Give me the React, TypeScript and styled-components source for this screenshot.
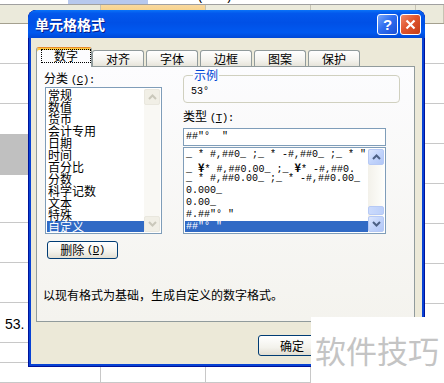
import React from "react";
import styled, { createGlobalStyle, css } from "styled-components";

const CJK = `"Noto Sans CJK SC", "Noto Sans CJK JP", sans-serif`;
const MONO = `"Liberation Mono", "Noto Sans CJK SC", monospace`;

const GlobalStyle = createGlobalStyle`
  html, body {
    margin: 0;
    padding: 0;
    background: #fff;
  }
  body {
    font-family: ${CJK};
  }
`;

const Page = styled.div`
  position: relative;
  width: 444px;
  height: 383px;
  overflow: hidden;
  background: #fff;
`;

/* ---------- spreadsheet behind the dialog ---------- */

const Sheet = styled.div`
  display: flex;
  flex-direction: column;
  width: 444px;
  height: 383px;
`;

const TopStrip = styled.div`
  display: grid;
  grid-template-columns: 68px 80px 1fr;
  height: 5px;
  box-sizing: border-box;
  border-bottom: 1px solid #a0a0a0;
  overflow: hidden;
`;

const SelCell = styled.div`
  background: #b6c8ee;
`;

const CutText = styled.div`
  font: 12px/12px ${MONO};
  margin: -9px 0 0 20px;
  color: #000;
  white-space: nowrap;
`;

const HeaderRow = styled.div`
  display: grid;
  grid-template-columns: 101px 105px 105px 105px 1fr;
  height: 20px;
  box-sizing: border-box;
  background: #ebeadb;
  border-bottom: 1px solid #a4a08f;
`;

const HeadCell = styled.div<{ $active?: boolean }>`
  border-right: 1px solid #c6c3b3;
  background: ${(p) => (p.$active ? "linear-gradient(#f9d99f, #f1c15f)" : "transparent")};
`;

const Body = styled.div`
  display: flex;
  flex: 1;
`;

const ColA = styled.div`
  display: flex;
  flex-direction: column;
  width: 101px;
  border-right: 1px solid #c8c8c8;
  box-sizing: border-box;
`;

const CellA = styled.div<{ $h: number; $gray?: boolean; $line?: boolean }>`
  height: ${(p) => p.$h}px;
  flex: none;
  box-sizing: border-box;
  background: ${(p) => (p.$gray ? "#c0c0c0" : "#fff")};
  border-bottom: ${(p) => (p.$line ? "1px solid #c8c8c8" : "none")};
  font: 14px/20px "Liberation Sans", sans-serif;
  color: #000;
  padding: 11px 0 0 5px;
`;

const Rest = styled.div`
  display: flex;
  flex-direction: column;
  flex: 1;
`;

const Row = styled.div<{ $h: number }>`
  display: grid;
  grid-template-columns: 105px 105px 105px 1fr;
  height: ${(p) => p.$h}px;
  flex: none;
  box-sizing: border-box;
  border-bottom: 1px solid #c8c8c8;
`;

const Cell = styled.div`
  border-right: 1px solid #c8c8c8;
`;

/* ---------- dialog window ---------- */

const Dialog = styled.div`
  position: absolute;
  left: 28px;
  top: 10px;
  width: 397px;
  height: 357px;
  display: flex;
  flex-direction: column;
  border-radius: 8px 8px 0 0;
  background: #0842d4;
  box-shadow: inset 0 0 0 1px #00139a;
  overflow: hidden;
`;

const TitleBar = styled.div`
  height: 28px;
  flex: none;
  display: flex;
  align-items: center;
  padding: 0 4px 0 7px;
  background: linear-gradient(
    #0a74f8 0%,
    #0358ec 12%,
    #0050e6 45%,
    #0059f0 80%,
    #0048d6 100%
  );
  border-radius: 8px 8px 0 0;
`;

const Title = styled.div`
  font: bold 14px/16px ${CJK};
  color: #fff;
  text-shadow: 1px 1px 0 #0a1c88;
`;

const CaptionButtons = styled.div`
  margin-left: auto;
  display: flex;
  gap: 2px;
`;

const CaptionButton = styled.div<{ $close?: boolean }>`
  width: 21px;
  height: 21px;
  box-sizing: border-box;
  border: 1px solid #fff;
  border-radius: 3px;
  display: flex;
  align-items: center;
  justify-content: center;
  color: #fff;
  font: bold 15px/15px "Liberation Sans", sans-serif;
  background: ${(p) =>
    p.$close
      ? "linear-gradient(135deg, #f08a6a, #e0552e 45%, #c43d16)"
      : "linear-gradient(135deg, #7aa8fa, #2f6ef0 45%, #1a4fd6)"};
`;

const Client = styled.div`
  flex: 1;
  margin: 0 3px 3px;
  background: #ece9d8;
  display: flex;
  flex-direction: column;
  padding: 9px 0 0 5px;
`;

const TabStrip = styled.div`
  display: flex;
  align-items: flex-end;
  gap: 2px;
  height: 19px;
  padding-left: 2px;
`;

const Tab = styled.div<{ $active?: boolean }>`
  box-sizing: border-box;
  width: 52px;
  height: 16px;
  border: 1px solid #919b9c;
  border-bottom: none;
  border-radius: 3px 3px 0 0;
  background: linear-gradient(#ffffff, #f4f3ee 60%, #e6e4da);
  font: 12px/15px ${CJK};
  text-align: center;
  color: #000;
  ${(p) =>
    p.$active &&
    css`
      position: relative;
      z-index: 1;
      width: 56px;
      height: 20px;
      margin: 0 -2px -1px;
      border-top: 1px solid #e68b2c;
      box-shadow: inset 0 2px 0 #ffc83c;
      background: #fcfcfe;
      padding: 1px 0 0 4px;
    `}
`;

const FocusLabel = styled.div`
  width: 50px;
  height: 14px;
  box-sizing: border-box;
  border: 1px dotted #000;
  font: 12px/12px ${CJK};
  text-align: center;
`;

const Panel = styled.div`
  width: 379px;
  height: 256px;
  flex: none;
  box-sizing: border-box;
  border: 1px solid #919b9c;
  background: linear-gradient(#fcfcfe, #f4f3ee);
  padding-left: 7px;
`;

const Columns = styled.div`
  display: grid;
  grid-template-columns: 118px 217px;
  column-gap: 21px;
  align-items: start;
`;

const Col = styled.div`
  display: flex;
  flex-direction: column;
  align-items: flex-start;
`;

const Label = styled.div<{ $top: number }>`
  margin-top: ${(p) => p.$top}px;
  font: 12px/13px ${CJK};
  color: #000;
  white-space: nowrap;
`;

const Ascii = styled.span`
  font-family: ${MONO};
  font-size: 11px;
  letter-spacing: -0.6px;
`;

const ListBox = styled.div<{ $w: number; $h: number; $top: number; $left?: number }>`
  width: ${(p) => p.$w}px;
  height: ${(p) => p.$h}px;
  margin-top: ${(p) => p.$top}px;
  margin-left: ${(p) => p.$left ?? 0}px;
  box-sizing: border-box;
  border: 1px solid #7f9db9;
  background: #fff;
  display: flex;
  padding: 1px;
`;

const Items = styled.div`
  flex: 1;
  overflow: hidden;
  display: flex;
  flex-direction: column;
`;

const Item = styled.div<{ $selected?: boolean; $mono?: boolean }>`
  height: 12px;
  flex: none;
  padding-left: 1px;
  white-space: nowrap;
  overflow: hidden;
  font: ${(p) => (p.$mono ? `10px/12px ${MONO}` : `12px/12px ${CJK}`)};
  color: ${(p) => (p.$selected ? "#fff" : "#000")};
  background: ${(p) => (p.$selected ? "#316ac5" : "transparent")};
`;

const Yen = styled.span`
  font-family: ${CJK};
  font-size: 11px;
  line-height: 12px;
  font-weight: bold;
`;

const ScrollBar = styled.div<{ $disabled?: boolean }>`
  width: 16px;
  display: flex;
  flex-direction: column;
  background: ${(p) => (p.$disabled ? "#f9f8f4" : "linear-gradient(90deg, #f3f1ea, #fefefb)")};
`;

const ScrollButton = styled.div<{ $disabled?: boolean }>`
  height: 16px;
  flex: none;
  box-sizing: border-box;
  border-radius: 2px;
  display: flex;
  align-items: center;
  justify-content: center;
  ${(p) =>
    p.$disabled
      ? css`
          border: 1px solid #e9e7de;
          background: #f1efe6;
          color: #cac8bb;
        `
      : css`
          border: 1px solid #b6c9f5;
          background: linear-gradient(135deg, #dde7fe, #c2d4fb 50%, #b2c7f7);
          color: #4d6185;
        `}
`;

const Track = styled.div`
  flex: 1;
  display: flex;
  flex-direction: column;
  justify-content: flex-end;
`;

const Thumb = styled.div`
  height: 9px;
  margin-bottom: 1px;
  box-sizing: border-box;
  border: 1px solid #b6c9f5;
  border-radius: 2px;
  background: linear-gradient(90deg, #cbdafc, #bcd0fa);
`;

const PushButton = styled.div<{ $w: number; $h: number; $top?: number; $left?: number }>`
  width: ${(p) => p.$w}px;
  height: ${(p) => p.$h}px;
  margin-top: ${(p) => p.$top ?? 0}px;
  margin-left: ${(p) => p.$left ?? 0}px;
  box-sizing: border-box;
  border: 1px solid #003c74;
  border-radius: 3px;
  background: linear-gradient(#ffffff, #f3f2ec 60%, #e2ded2);
  display: flex;
  align-items: center;
  justify-content: center;
  font: 12px/12px ${CJK};
  color: #000;
  flex: none;
`;

const GroupBox = styled.fieldset`
  margin: 2px 0 0;
  padding: 0 7px 3px;
  min-width: 0;
  width: 217px;
  box-sizing: border-box;
  border: 1px solid #d0d0bf;
  border-radius: 4px;
`;

const Legend = styled.legend`
  padding: 0 1px;
  margin-left: 2px;
  font: 12px/12px ${CJK};
  color: #0046d5;
`;

const Sample = styled.div`
  margin-top: 4px;
  font: 10px/14px ${MONO};
  color: #000;
`;

const TextBox = styled.div`
  width: 203px;
  height: 18px;
  margin-top: 3px;
  box-sizing: border-box;
  border: 1px solid #7f9db9;
  background: #fff;
  padding: 0 0 0 2px;
  font: 10px/16px ${MONO};
  color: #000;
  white-space: pre;
`;

const Description = styled.div`
  margin: 29px 0 0 -1px;
  font: 12px/13px ${CJK};
  color: #000;
`;

const Footer = styled.div`
  display: flex;
  justify-content: flex-end;
  gap: 6px;
  margin-top: 13px;
  padding-right: 22px;
`;

const Watermark = styled.div`
  position: absolute;
  right: 0;
  bottom: 0;
  width: 133px;
  height: 66px;
  background: #fff;
  display: flex;
  align-items: center;
  padding-left: 4px;
  box-sizing: border-box;
  font: 31px/34px ${CJK};
  color: #c4c4c4;
  white-space: nowrap;
`;

const Arrow = ({ up }: { up?: boolean }) => (
  <svg width="9" height="6" viewBox="0 0 9 6">
    <polyline
      points={up ? "1,5 4.5,1.5 8,5" : "1,1 4.5,4.5 8,1"}
      fill="none"
      stroke="currentColor"
      strokeWidth="2"
    />
  </svg>
);

const CloseGlyph = () => (
  <svg width="11" height="11" viewBox="0 0 11 11">
    <path d="M1.5 1.5 L9.5 9.5 M9.5 1.5 L1.5 9.5" stroke="#fff" strokeWidth="2.2" />
  </svg>
);

const categories = [
  "常规",
  "数值",
  "货币",
  "会计专用",
  "日期",
  "时间",
  "百分比",
  "分数",
  "科学记数",
  "文本",
  "特殊",
  "自定义",
];

const formats: React.ReactNode[] = [
  '_ * #,##0_ ;_ * -#,##0_ ;_ * "',
  <>
    _ <Yen>¥</Yen>* #,##0.00_ ;_ <Yen>¥</Yen>* -#,##0.
  </>,
  "_ * #,##0.00_ ;_ * -#,##0.00_",
  "0.000_",
  "0.00_",
  '#.##"°  "',
  '##"°  "',
];

const tabs = ["数字", "对齐", "字体", "边框", "图案", "保护"];

const colARows: { h: number; gray?: boolean; line?: boolean; text?: string }[] = [
  { h: 40, line: true },
  { h: 40, line: true },
  { h: 30 },
  { h: 41, gray: true },
  { h: 48, line: true },
  { h: 40, line: true },
  { h: 40, line: true },
  { h: 40, line: true, text: "53." },
  { h: 20, line: true },
  { h: 20, line: true },
];

const restRows = [40, 40, 40, 40, 40, 40, 40, 40, 20, 19];

export default function App() {
  return (
    <Page>
      <GlobalStyle />
      <Sheet>
        <TopStrip>
          <div />
          <SelCell />
          <CutText>20% (53°)</CutText>
        </TopStrip>
        <HeaderRow>
          <HeadCell />
          <HeadCell $active />
          <HeadCell />
          <HeadCell />
          <HeadCell />
        </HeaderRow>
        <Body>
          <ColA>
            {colARows.map((r, i) => (
              <CellA key={i} $h={r.h} $gray={r.gray} $line={r.line}>
                {r.text}
              </CellA>
            ))}
          </ColA>
          <Rest>
            {restRows.map((h, i) => (
              <Row key={i} $h={h}>
                <Cell />
                <Cell />
                <Cell />
                <div />
              </Row>
            ))}
          </Rest>
        </Body>
      </Sheet>

      <Dialog>
        <TitleBar>
          <Title>单元格格式</Title>
          <CaptionButtons>
            <CaptionButton>?</CaptionButton>
            <CaptionButton $close>
              <CloseGlyph />
            </CaptionButton>
          </CaptionButtons>
        </TitleBar>
        <Client>
          <TabStrip>
            {tabs.map((t, i) =>
              i === 0 ? (
                <Tab key={t} $active>
                  <FocusLabel>{t}</FocusLabel>
                </Tab>
              ) : (
                <Tab key={t}>{t}</Tab>
              )
            )}
          </TabStrip>
          <Panel>
            <Columns>
              <Col>
                <Label $top={4}>
                  分类 <Ascii>(<u>C</u>):</Ascii>
                </Label>
                <ListBox $w={117} $h={147} $top={0} $left={1}>
                  <Items>
                    {categories.map((c) => (
                      <Item key={c} $selected={c === "自定义"}>
                        {c}
                      </Item>
                    ))}
                  </Items>
                  <ScrollBar $disabled>
                    <ScrollButton $disabled>
                      <Arrow up />
                    </ScrollButton>
                    <Track />
                    <ScrollButton $disabled>
                      <Arrow />
                    </ScrollButton>
                  </ScrollBar>
                </ListBox>
                <PushButton $w={71} $h={18} $top={7} $left={3}>
                  删除&nbsp;<Ascii>(<u>D</u>)</Ascii>
                </PushButton>
              </Col>
              <Col>
                <GroupBox>
                  <Legend>示例</Legend>
                  <Sample>53°</Sample>
                </GroupBox>
                <Label $top={6}>
                  类型 <Ascii>(<u>T</u>):</Ascii>
                </Label>
                <TextBox>{'##"°  "'}</TextBox>
                <ListBox $w={203} $h={87} $top={1}>
                  <Items>
                    {formats.map((f, i) => (
                      <Item key={i} $mono $selected={i === formats.length - 1}>
                        {f}
                      </Item>
                    ))}
                  </Items>
                  <ScrollBar>
                    <ScrollButton>
                      <Arrow up />
                    </ScrollButton>
                    <Track>
                      <Thumb />
                    </Track>
                    <ScrollButton>
                      <Arrow />
                    </ScrollButton>
                  </ScrollBar>
                </ListBox>
              </Col>
            </Columns>
            <Description>以现有格式为基础，生成自定义的数字格式。</Description>
          </Panel>
          <Footer>
            <PushButton $w={68} $h={21}>
              确定
            </PushButton>
            <PushButton $w={68} $h={21}>
              取消
            </PushButton>
          </Footer>
        </Client>
      </Dialog>

      <Watermark>软件技巧</Watermark>
    </Page>
  );
}
